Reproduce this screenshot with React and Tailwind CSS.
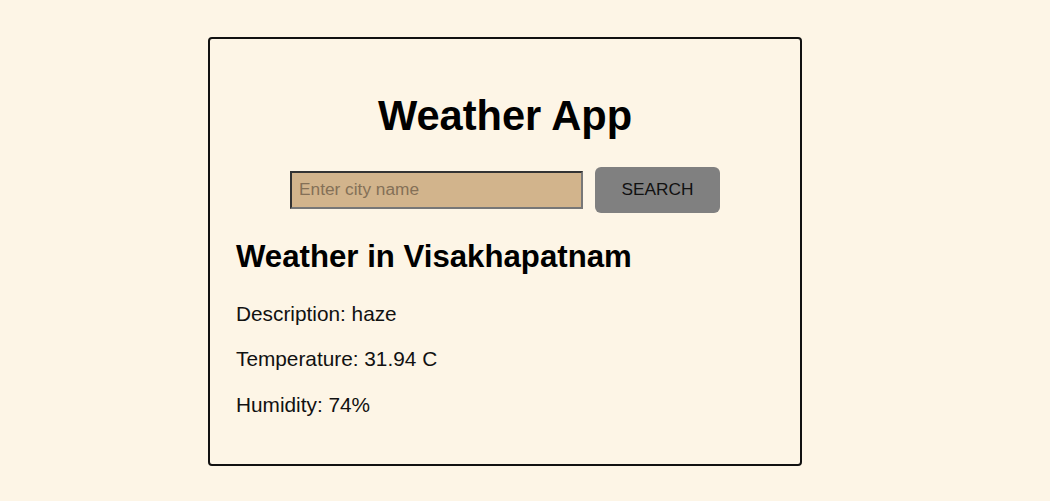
export default function App() {
  return (
    <div className="min-h-[501px] bg-[#fdf5e6] pt-[37px] font-['Liberation_Sans',Arial,sans-serif] text-black">
      <div className="flex justify-center pr-[40px]">
        <div className="w-[594px] rounded-[4px] border-2 border-[#111] p-[26px]">
          <h1 className="mt-[27px] mb-[27px] text-center text-[41.6px] font-bold leading-[1.15]">Weather App</h1>
          <div className="flex items-center justify-center gap-[12px]">
            <input
              type="text"
              placeholder="Enter city name"
              className="h-[38px] w-[293px] border-2 border-t-[#333] border-l-[#333] border-b-[#777] border-r-[#777] bg-[#d2b48c] px-[7px] text-[17.3px] text-black outline-none placeholder:text-[#847057]"
            />
            <button className="h-[46px] w-[125px] rounded-[6px] bg-[#808080] text-[17.3px] text-[#111]">
              SEARCH
            </button>
          </div>
          <h2 className="mt-[26px] mb-[27px] text-[31.2px] font-bold leading-[1.15]">Weather in Visakhapatnam</h2>
          <p className="my-[21.5px] text-[20.8px] leading-[1.15] text-[#111]">Description: haze</p>
          <p className="my-[21.5px] text-[20.8px] leading-[1.15] text-[#111]">Temperature: 31.94 C</p>
          <p className="mt-[21.5px] mb-[21.6px] text-[20.8px] leading-[1.15] text-[#111]">Humidity: 74%</p>
        </div>
      </div>
    </div>
  );
}
